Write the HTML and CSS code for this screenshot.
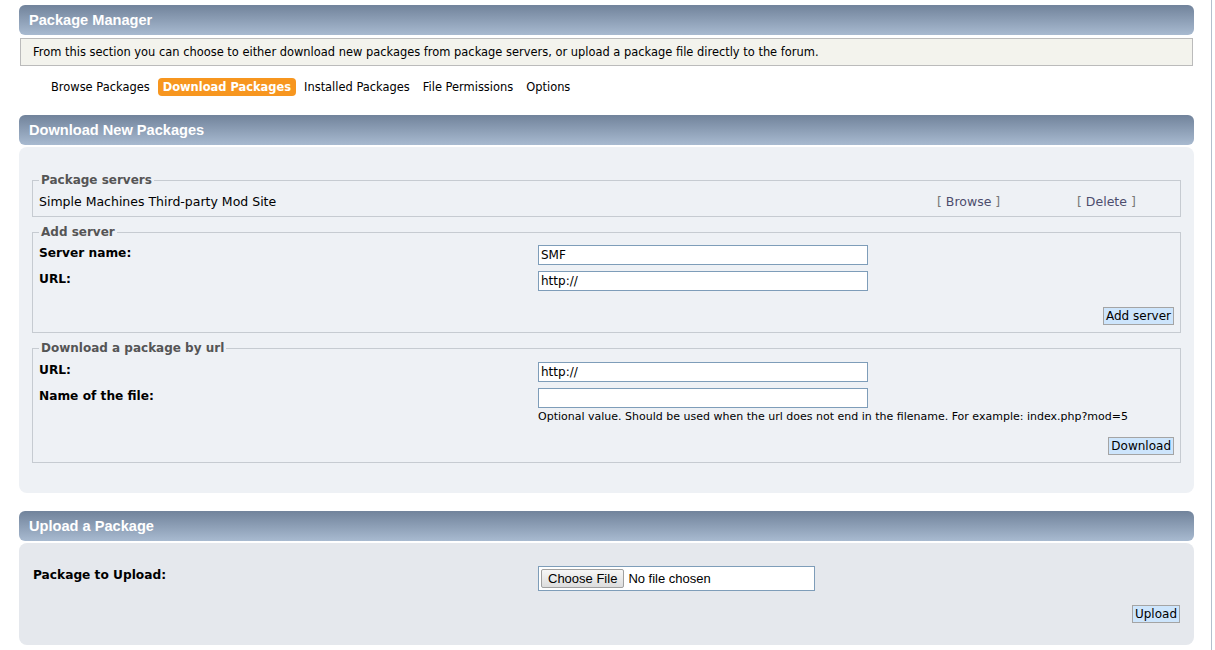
FILE: index.html
```
<!DOCTYPE html>
<html lang="en">
<head>
  <meta charset="UTF-8" />
  <title>Package Manager</title>
  <link rel="stylesheet" href="styles.css">
</head>
<body>
  <div class="frame">
    <div class="page">
      <!-- header -->
      <div class="cat-bar"><h3>Package Manager</h3></div>
      <p class="information">From this section you can choose to either download new packages from package servers, or upload a package file directly to the forum.</p>

      <ul class="tabs">
        <li><a href="#">Browse Packages</a></li>
        <li class="active"><a href="#">Download Packages</a></li>
        <li><a href="#">Installed Packages</a></li>
        <li><a href="#">File Permissions</a></li>
        <li><a href="#">Options</a></li>
      </ul>

      <!-- download section -->
      <div class="cat-bar"><h3>Download New Packages</h3></div>
      <div class="window">
        <fieldset>
          <legend>Package servers</legend>
          <div class="server-row">
            <span>Simple Machines Third-party Mod Site</span>
            <a href="#" class="action">[ <span>Browse</span> ]</a>
            <a href="#" class="action">[ <span>Delete</span> ]</a>
          </div>
        </fieldset>

        <fieldset>
          <legend>Add server</legend>
          <dl class="settings">
            <dt>Server name:</dt>
            <dd><input type="text" class="input-text" value="SMF"></dd>
            <dt>URL:</dt>
            <dd><input type="text" class="input-text" value="http://"></dd>
          </dl>
          <div class="button-row"><button type="button">Add server</button></div>
        </fieldset>

        <fieldset>
          <legend>Download a package by url</legend>
          <dl class="settings by-url">
            <dt>URL:</dt>
            <dd><input type="text" class="input-text" value="http://"></dd>
            <dt>Name of the file:</dt>
            <dd>
              <input type="text" class="input-text" value="">
              <span class="note">Optional value. Should be used when the url does not end in the filename. For example: index.php?mod=5</span>
            </dd>
          </dl>
          <div class="button-row download-row"><button type="button">Download</button></div>
        </fieldset>
      </div>

      <!-- upload section -->
      <div class="cat-bar upload-bar"><h3>Upload a Package</h3></div>
      <div class="window upload">
        <dl class="settings">
          <dt>Package to Upload:</dt>
          <dd><input type="file" class="input-file"></dd>
        </dl>
        <div class="button-row upload-row"><button type="button">Upload</button></div>
      </div>
    </div>
  </div>
</body>
</html>
```

FILE: styles.css
```
body {
  margin: 0;
  font-family: "DejaVu Sans", Verdana, sans-serif;
  font-size: 11.45px;
  color: #000;
  background: #fff;
}
.frame {
  width: 1211px;
  min-height: 650px;
  border-right: 1px solid #b3bfcd;
}
.page {
  padding: 5px 17px 0 19px;
}

/* title bars */
.cat-bar {
  height: 30px;
  display: flex;
  align-items: center;
  padding: 0 10px;
  border-radius: 6px;
  background: linear-gradient(#71839b, #a8bad0);
}
.cat-bar h3 {
  margin: 0;
  font-family: "Liberation Sans", Arial, sans-serif;
  font-size: 14.6px;
  font-weight: bold;
  color: #fff;
}
.upload-bar {
  margin-top: 18px;
}

.information {
  margin: 3px 1px 0;
  padding: 6px 12px;
  line-height: 14px;
  background: #f3f3ed;
  border: 1px solid #bbb;
}

/* tabs */
.tabs {
  list-style: none;
  display: flex;
  gap: 3px;
  margin: 12px 0 19px;
  padding: 0 0 0 27px;
}
.tabs a {
  display: block;
  padding: 2px 5px 1px;
  line-height: 15px;
  border-radius: 4px;
  color: #000;
  text-decoration: none;
}
.tabs .active a {
  background: #f7961f;
  color: #fff;
  font-weight: bold;
}

/* content windows */
.window {
  margin-top: 2px;
  padding: 26px 13px 30px;
  background: #eef1f5;
  border-radius: 8px;
}
.window.upload {
  background: #e5e8ed;
  padding: 23px 14px 22px;
}

fieldset {
  margin: 0 0 8px;
  padding: 0 6px 7px;
  border: 1px solid #c6cbd1;
  min-width: 0;
}
fieldset:last-child {
  margin-bottom: 0;
}
legend {
  padding: 0 2px;
  font-size: 12px;
  font-weight: bold;
  color: #555;
}

.server-row {
  display: grid;
  grid-template-columns: 1fr 140px 97px;
  padding: 8px 0 0;
  line-height: 14px;
  font-size: 12.5px;
}
.server-row .action {
  color: #777;
  text-decoration: none;
}
.server-row .action span {
  color: #4d4d6d;
}

.settings {
  display: grid;
  grid-template-columns: 499px 1fr;
  row-gap: 6px;
  margin: 6px 0 0;
}
.settings.by-url {
  margin-top: 7px;
}
.settings dt {
  font-weight: bold;
  font-size: 12.2px;
  padding-top: 1px;
}
.settings dd {
  margin: 0;
}
.window.upload .settings {
  grid-template-columns: 505px 1fr;
  margin: 0;
}
.window.upload .settings dt {
  padding-top: 2px;
}

.input-text {
  box-sizing: border-box;
  width: 330px;
  height: 20px;
  padding: 1px 2px;
  border: 1px solid #7e9db9;
  background: #fff;
  font-family: "DejaVu Sans", Verdana, sans-serif;
  font-size: 12px;
  color: #000;
}
.note {
  display: block;
  margin-top: 2px;
  font-size: 11px;
  line-height: 13px;
}

.input-file {
  box-sizing: border-box;
  width: 277px;
  height: 25px;
  padding: 2px;
  border: 1px solid #7e9db9;
  background: #fff;
  font-family: "Liberation Sans", Arial, sans-serif;
  font-size: 13px;
}
.input-file::file-selector-button {
  font-family: "Liberation Sans", Arial, sans-serif;
  font-size: 13px;
  padding: 0 6px;
  height: 19px;
  margin-right: 4px;
  border: 1px solid #a0a0a0;
  border-radius: 2px;
  background: linear-gradient(#f6f6f6, #dddddd);
}

.button-row {
  display: flex;
  justify-content: flex-end;
  margin-top: 16px;
}
.button-row.download-row {
  margin-top: 14px;
}
.button-row.upload-row {
  margin-top: 14px;
}
.button-row button {
  height: 18px;
  padding: 0 2px;
  font-family: "DejaVu Sans", Verdana, sans-serif;
  font-size: 12px;
  color: #000;
  background: #cde5fc;
  border: 1px solid #a4a4a4;
}
```
